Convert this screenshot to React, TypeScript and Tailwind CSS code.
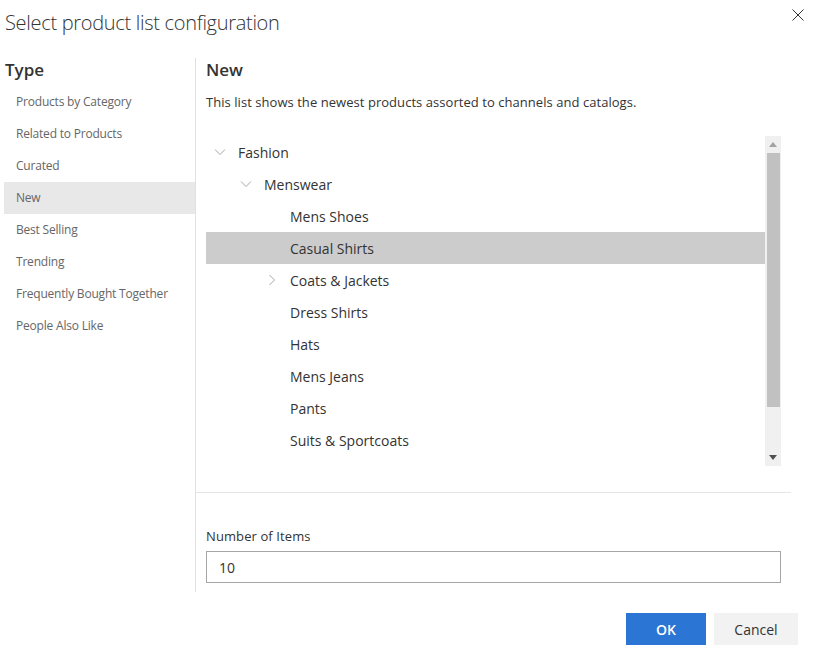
import React from "react";

const TYPES = [
  "Products by Category",
  "Related to Products",
  "Curated",
  "New",
  "Best Selling",
  "Trending",
  "Frequently Bought Together",
  "People Also Like",
];

type Node = { label: string; depth: number; chevron?: "down" | "right"; selected?: boolean };

const TREE: Node[] = [
  { label: "Fashion", depth: 0, chevron: "down" },
  { label: "Menswear", depth: 1, chevron: "down" },
  { label: "Mens Shoes", depth: 2 },
  { label: "Casual Shirts", depth: 2, selected: true },
  { label: "Coats & Jackets", depth: 2, chevron: "right" },
  { label: "Dress Shirts", depth: 2 },
  { label: "Hats", depth: 2 },
  { label: "Mens Jeans", depth: 2 },
  { label: "Pants", depth: 2 },
  { label: "Suits & Sportcoats", depth: 2 },
];

const PAD = ["pl-[8px]", "pl-[34px]", "pl-[60px]"];

function Chevron({ dir }: { dir: "down" | "right" }) {
  return (
    <svg width="12" height="12" viewBox="0 0 12 12" className="shrink-0">
      {dir === "down" ? (
        <polyline points="1,3.5 6,8.5 11,3.5" fill="none" stroke="#a6a6a6" strokeWidth="1" />
      ) : (
        <polyline points="3.5,1 8.5,6 3.5,11" fill="none" stroke="#a6a6a6" strokeWidth="1" />
      )}
    </svg>
  );
}

export default function App() {
  return (
    <div className="w-[817px] h-[655px] bg-white flex flex-col text-[#333] font-['Open_Sans',sans-serif] overflow-hidden">
      {/* header */}
      <div className="h-[58px] flex items-start justify-between pl-[5px] pr-[13px]">
        <h1 className="mt-[9px] text-[20px] font-light leading-[28px] text-[#333] tracking-[-0.3px]">
          Select product list configuration
        </h1>
        <button className="mt-[9px] w-[12px] h-[12px]" aria-label="Close">
          <svg width="12" height="12" viewBox="0 0 12 12">
            <path d="M0.5 0.5 L11.5 11.5 M11.5 0.5 L0.5 11.5" stroke="#333" strokeWidth="1" />
          </svg>
        </button>
      </div>

      {/* body */}
      <div className="flex h-[534px]">
        <div className="w-[196px] border-r border-[#e1e1e1] pl-[4px]">
          <h2 className="pl-[1px] text-[17px] font-semibold leading-[24px] text-[#333]">Type</h2>
          <ul className="mt-[4px]">
            {TYPES.map((t) => (
              <li
                key={t}
                className={`h-[32px] flex items-center pl-[12px] text-[12px] text-[#666] tracking-[-0.2px] ${
                  t === "New" ? "bg-[#e8e8e8]" : ""
                }`}
              >
                {t}
              </li>
            ))}
          </ul>
        </div>

        <div className="w-[595px] flex flex-col">
          <div className="px-[10px]">
            <h2 className="text-[17px] font-semibold leading-[24px] text-[#333]">New</h2>
            <p className="mt-[11px] text-[13px] leading-[18px] text-[#333] tracking-[0.05px]">
              This list shows the newest products assorted to channels and catalogs.
            </p>

            <div className="mt-[25px] h-[330px] flex">
              <div className="flex-1">
                {TREE.map((n) => (
                  <div
                    key={n.label}
                    className={`h-[32px] flex items-center gap-[12px] text-[14px] text-[#333] ${PAD[n.depth]} ${
                      n.selected ? "bg-[#cccccc]" : ""
                    }`}
                  >
                    <span className="w-[12px] flex justify-center">
                      {n.chevron && <Chevron dir={n.chevron} />}
                    </span>
                    <span>{n.label}</span>
                  </div>
                ))}
              </div>
              {/* scrollbar */}
              <div className="w-[16px] bg-[#f0f0f0] flex flex-col items-center">
                <div className="h-[17px] flex items-center justify-center">
                  <svg width="8" height="5" viewBox="0 0 8 5">
                    <polygon points="4,0 8,5 0,5" fill="#a3a3a3" />
                  </svg>
                </div>
                <div className="w-[13px] h-[254px] bg-[#c1c1c1]" />
                <div className="flex-1" />
                <div className="h-[17px] flex items-center justify-center">
                  <svg width="8" height="5" viewBox="0 0 8 5">
                    <polygon points="0,0 8,0 4,5" fill="#505050" />
                  </svg>
                </div>
              </div>
            </div>
          </div>

          <div className="mt-[26px] border-t border-[#e5e5e5]" />

          <div className="px-[10px] pt-[34px]">
            <label className="block text-[13px] leading-[18px] text-[#333] tracking-[0.1px]">Number of Items</label>
            <div className="mt-[6px] h-[32px] border border-[#a6a6a6] flex items-center pl-[12px] text-[14px] text-[#333]">
              10
            </div>
          </div>
        </div>
      </div>

      {/* footer */}
      <div className="flex justify-end gap-[8px] pr-[19px] pt-[21px]">
        <button className="w-[80px] h-[32px] bg-[#2b76d4] text-white text-[14px] font-semibold">OK</button>
        <button className="w-[84px] h-[32px] bg-[#f2f2f2] text-[#333] text-[14px]">Cancel</button>
      </div>
    </div>
  );
}
